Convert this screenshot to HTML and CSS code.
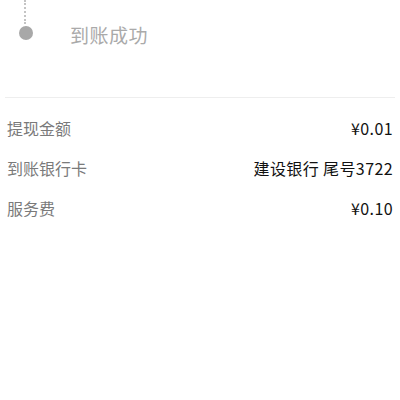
FILE: index.html
```html
<!DOCTYPE html>
<html>
<head>
<meta charset="utf-8">
<title>提现详情</title>
<link rel="stylesheet" href="styles.css">
</head>
<body>

<div class="progress">
   <div class="step">
      <div class="marker">
         <div class="trail"></div>
         <div class="dot"></div>
      </div>
      <p class="step-text">到账成功</p>
   </div>
</div>

<div class="divider"></div>

<div class="details">
   <div class="row">
      <span class="label">提现金额</span>
      <span class="value">¥0.01</span>
   </div>
   <div class="row">
      <span class="label">到账银行卡</span>
      <span class="value">建设银行 尾号3722</span>
   </div>
   <div class="row">
      <span class="label">服务费</span>
      <span class="value">¥0.10</span>
   </div>
</div>

</body>
</html>
```

FILE: styles.css
```css
html , body {
   margin:0px;
   padding:0px;
   border:0px;
   width:100%;
   height:100%;
}

body {
   background:#ffffff;
   font-family:"Noto Sans CJK SC", "Noto Sans", sans-serif;
}

.progress {
   height:97px;
   padding-left:19px;
   box-sizing:border-box;
}

.step {
   display:flex;
   align-items:flex-start;
}

.marker {
   width:14px;
   display:flex;
   flex-direction:column;
   align-items:center;
}

.trail {
   width:0px;
   height:24px;
   border-left:2px dotted #c4c4c4;
   margin-right:2px;
}

.dot {
   width:14px;
   height:14px;
   margin-top:2px;
   border-radius:50%;
   background:#a8a8a8;
}

.step-text {
   margin:25px 0px 0px 37px;
   font-size:19px;
   line-height:20px;
   color:#aaaaaa;
   letter-spacing:0.5px;
}

.divider {
   margin:0px 5px;
   height:1px;
   background:#eeeeee;
}

.details {
   padding:10px 7px 0px 7px;
}

.row {
   display:flex;
   justify-content:space-between;
   align-items:center;
   height:40px;
}

.label {
   font-size:16px;
   color:#7a7a7a;
}

.value {
   font-size:16px;
   font-weight:400;
   letter-spacing:0.4px;
   color:#111111;
}
```
